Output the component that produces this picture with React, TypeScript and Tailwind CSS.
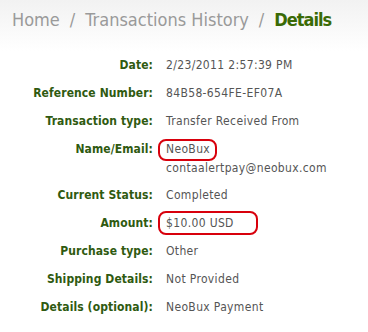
const rows: { label: string; value: string[]; boxed?: boolean }[] = [
  { label: "Date:", value: ["2/23/2011 2:57:39 PM"] },
  { label: "Reference Number:", value: ["84B58-654FE-EF07A"] },
  { label: "Transaction type:", value: ["Transfer Received From"] },
  { label: "Name/Email:", value: ["NeoBux", "contaalertpay@neobux.com"], boxed: true },
  { label: "Current Status:", value: ["Completed"] },
  { label: "Amount:", value: ["$10.00 USD"], boxed: true },
  { label: "Purchase type:", value: ["Other"] },
  { label: "Shipping Details:", value: ["Not Provided"] },
  { label: "Details (optional):", value: ["NeoBux Payment"] },
];

export default function App() {
  return (
    <div className="w-[368px] h-[332px] bg-white overflow-hidden font-['DejaVu_Sans_Condensed','DejaVu_Sans',sans-serif]">
      {/* breadcrumb */}
      <div className="h-[51px] bg-gradient-to-b from-[#f2f2f2] to-white pl-[12px] pt-[7px] text-[18px] leading-[26px] text-[#9a9a9a] whitespace-nowrap">
        Home<span className="mx-[10px]">/</span>Transactions History<span className="mx-[10px]">/</span>
        <span className="font-bold text-[#3a6a05] tracking-[-1px]">Details</span>
      </div>

      {/* details table */}
      <div className="flex flex-col text-[12px]">
        {rows.map((row) => (
          <div key={row.label} className="flex gap-[13px]">
            <div className="w-[153px] shrink-0 text-right font-bold text-[#2f5a10] leading-[28px] tracking-[0.1px]">
              {row.label}
            </div>
            <div className="text-[#555555] tracking-[0.35px]">
              {row.value.length > 1 ? (
                <div className="pt-[5px] pb-[3px]">
                  <div className="leading-[19px]">
                    <span className="relative">
                      {row.value[0]}
                      <span className="absolute -left-[8px] -right-[7px] -top-[3px] -bottom-[5px] border-2 border-[#d8000c] rounded-[8px]" />
                    </span>
                  </div>
                  <div className="leading-[19px]">{row.value[1]}</div>
                </div>
              ) : (
                <div className="leading-[28px]">
                  {row.boxed ? (
                    <span className="relative">
                      {row.value[0]}
                      <span className="absolute -left-[8px] -right-[24px] -top-[5px] -bottom-[5px] border-2 border-[#d8000c] rounded-[8px]" />
                    </span>
                  ) : (
                    row.value[0]
                  )}
                </div>
              )}
            </div>
          </div>
        ))}
      </div>
    </div>
  );
}
